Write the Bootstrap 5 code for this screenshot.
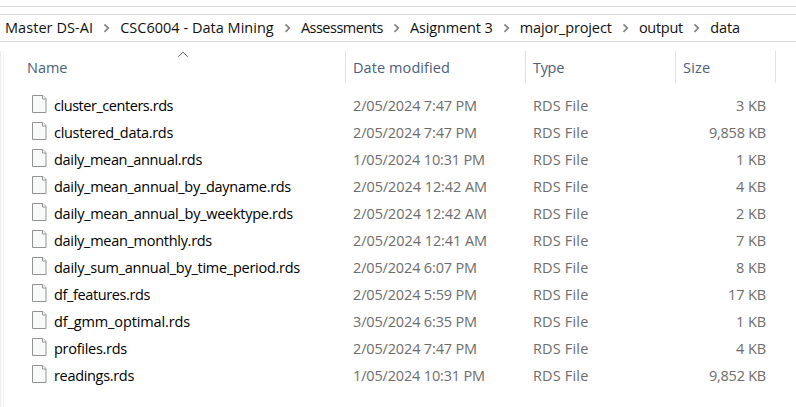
<!DOCTYPE html>
<html lang="en">
<head>
<meta charset="utf-8">
<meta name="viewport" content="width=device-width, initial-scale=1">
<title>data</title>
<link href="https://cdn.jsdelivr.net/npm/bootstrap@5.3.0/dist/css/bootstrap.min.css" rel="stylesheet">
<script src="https://cdn.jsdelivr.net/npm/bootstrap@5.3.0/dist/js/bootstrap.bundle.min.js"></script>
<style>
body{font-family:"Open Sans","Noto Sans",sans-serif;font-size:14.5px;line-height:27px;color:#000;background:#fff;height:407px}
.top-strip{height:7px;border-bottom:1px solid #d9d9d9}
.address{height:28px;margin-top:7px;border-top:1px solid #d9d9d9;border-bottom:1px solid #d9d9d9;padding-left:5px;line-height:25px;color:#111}
.chev{width:27.2px}
.pane{height:356px;margin-top:9px}
.edge{width:4px;border-right:1px solid #f3f3f3}
.edge::before{content:"";display:block;width:1px;height:100%;background:#ececec}
.heads{height:32px;color:#4c607a;line-height:33px;margin-bottom:9px}
.c-name{width:342px;padding-left:23px}
.c-date{width:180px;padding-left:7px}
.c-type{width:150px;padding-left:7px}
.c-size{width:100px;padding-left:7px}
.heads>div{border-right:1px solid #e2e2e2}
.sort{left:173.5px;top:0}
.file-row{height:27px;color:#6d6d6d}
.file-row .c-name{color:#000;padding-left:28px}
.file-row .c-size{padding-right:10px}
.page-icon{width:15px;height:18px;margin:3px 7px 0 0}
.t{white-space:pre}
</style>
</head>
<body class="overflow-hidden">
<div class="top-strip"></div>
<nav class="address d-flex" id="path" aria-label="Path"></nav>
<main class="pane d-flex">
<div class="edge flex-shrink-0"></div>
<div>
<div class="heads d-flex position-relative">
<svg class="sort position-absolute" width="10" height="7" viewBox="0 0 10 7"><path d="M.5 5.7 5 1.2l4.5 4.5" fill="none" stroke="#555" stroke-width="1"/></svg>
<div class="c-name"><span class="t" data-w="40.5">Name</span></div>
<div class="c-date"><span class="t" data-w="97">Date modified</span></div>
<div class="c-type"><span class="t" data-w="31">Type</span></div>
<div class="c-size"><span class="t" data-w="27.5">Size</span></div>
</div>
<div id="files"></div>
</div>
</main>
<script>
const path=[["Master DS-AI",88],["CSC6004 - Data Mining",153.5],["Assessments",82],["Asignment 3",82.5],["major_project",92],["output",44],["data",30]];
const chev='<svg class="chev flex-shrink-0" height="26" viewBox="0 0 27.2 26"><path d="m11.5 9.3 3.8 3.8-3.8 3.8" fill="none" stroke="#858585" stroke-width="1.7"/></svg>';
const text=(s,w)=>`<span class="t" data-w="${w}">${s}</span>`;
document.getElementById("path").innerHTML=path.map(p=>text(...p)).join(chev);
const files=[
["cluster_centers.rds",119,"2/05/2024 7:47 PM",124,"3 KB",30],
["clustered_data.rds",119,"2/05/2024 7:47 PM",124,"9,858 KB",57],
["daily_mean_annual.rds",148,"1/05/2024 10:31 PM",132,"1 KB",30],
["daily_mean_annual_by_dayname.rds",237,"2/05/2024 12:42 AM",134,"4 KB",30],
["daily_mean_annual_by_weektype.rds",239,"2/05/2024 12:42 AM",134,"2 KB",30],
["daily_mean_monthly.rds",158,"2/05/2024 12:41 AM",134,"7 KB",30],
["daily_sum_annual_by_time_period.rds",246,"2/05/2024 6:07 PM",124,"8 KB",30],
["df_features.rds",96,"2/05/2024 5:59 PM",124,"17 KB",38],
["df_gmm_optimal.rds",136,"3/05/2024 6:35 PM",124,"1 KB",30],
["profiles.rds",73,"2/05/2024 7:47 PM",124,"4 KB",30],
["readings.rds",80,"1/05/2024 10:31 PM",132,"9,852 KB",57]];
const icon='<svg class="page-icon flex-shrink-0" viewBox="0 0 15 18"><path d="M.5.5h10.5l3 3v14H.5z" fill="#f8f9f9" stroke="#929292"/><path d="M10.5.5v3.5H14" fill="#fff" stroke="#929292"/></svg>';
document.getElementById("files").innerHTML=files.map(f=>`<div class="file-row d-flex">
<div class="c-name d-flex">${icon}${text(f[0],f[1])}</div>
<div class="c-date">${text(f[2],f[3])}</div>
<div class="c-type">${text("RDS File",55.5)}</div>
<div class="c-size text-end">${text(f[4],f[5])}</div></div>`).join("");
// Track each label to its column text width
document.querySelectorAll(".t").forEach(e=>{
const d=(e.dataset.w-e.getBoundingClientRect().width)/e.textContent.length;
e.style.letterSpacing=d+"px";
});
</script>
</body>
</html>
